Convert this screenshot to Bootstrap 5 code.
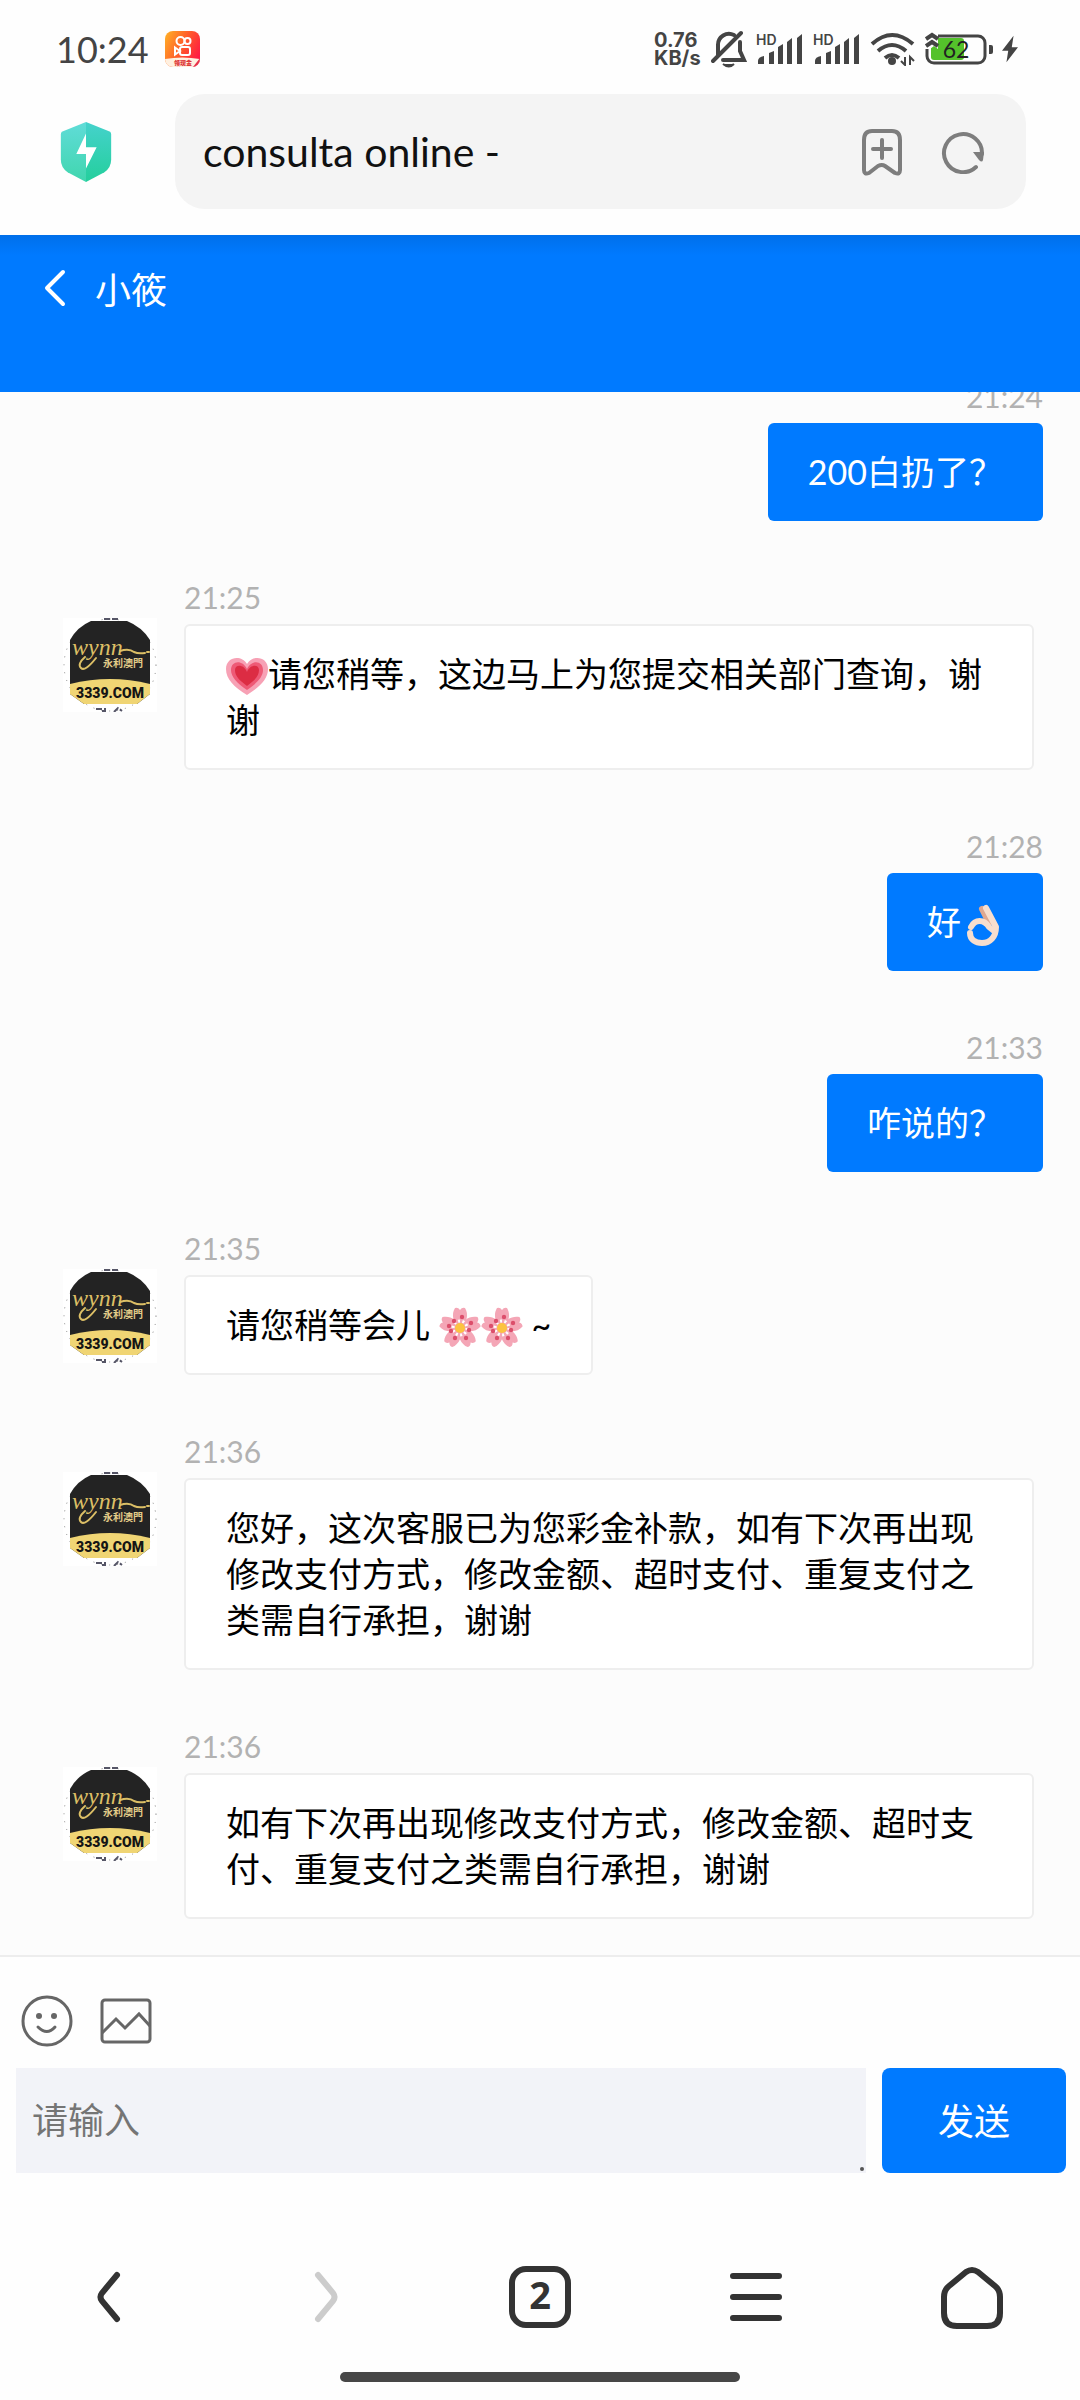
<!DOCTYPE html>
<html lang="zh-CN">
<head>
<meta charset="utf-8">
<meta name="viewport" content="width=device-width, initial-scale=1">
<title>consulta online</title>
<link rel="stylesheet" href="https://cdn.jsdelivr.net/npm/bootstrap@5.3.0/dist/css/bootstrap.min.css">
<style>
  :root { --brand: #007aff; --ink: #333; }
  body { font-family: Lato, "Noto Sans CJK SC", sans-serif; font-size: 34px; line-height: 46px; color: #000; background: #fefefe; }
  svg { display: block; flex: none; }
  button { font-family: inherit; }
  .plain-btn { background: none; border: 0; padding: 0; line-height: 0; }

  .status-bar { height: 94px; padding: 4px 62px 0 56px; color: #444; }
  .clock { font-size: 36px; }
  .status-icons { gap: 9px; }
  .net-speed { font: 700 20px/18px Inter, sans-serif; width: 48px; }
  .address-row { padding: 0 54px 26px 60px; gap: 63px; }
  .address-box { height: 115px; border-radius: 30px; background: #f4f4f4; padding: 0 41px 0 28px; gap: 37px; }
  .address-input { border: 0; background: none; font-size: 41px; color: #111; min-width: 0; padding: 0; outline: 0; }

  .chat-head { height: 157px; background: linear-gradient(#0070ea, var(--brand) 20px); color: #fff; padding: 32px 43px 0; gap: 28px; font-size: 36px; }
  .chat-log { flex: 1 1 0; min-height: 0; overflow: hidden; background: #fcfcfc; padding: 0 37px 36px 63px; gap: 54px; border-bottom: 2px solid #ededed; }
  .msg { flex: none; gap: 27px; }
  .msg-in { padding-right: 9px; }
  .avatar { margin-top: 43px; }
  .stamp { font-size: 30px; line-height: 44px; color: #b2b2b2; margin-bottom: 5px; }
  .bubble { padding: 25px 40px; border: 2px solid #eee; border-radius: 6px; background: #fff; }
  .bubble-out { padding: 26px 40px; border: 0; background: var(--brand); color: #fff; }
  .emo { display: inline-block; width: 42px; height: 42px; vertical-align: -7px; margin: -4px 0; }

  .composer { padding: 38px 14px 10px 16px; }
  .tools { gap: 27px; padding-left: 5px; margin-bottom: 21px; }
  .entry-row { gap: 16px; }
  .entry { height: 105px; border: 0; border-radius: 0; background: #f2f3f8; padding: 28px 16px; font-size: 36px; line-height: 48px; outline: 0; display: block; min-width: 0; resize: none; overflow: hidden; }
  .entry::placeholder { color: #757575; opacity: 1; }
  .grip { right: 2px; bottom: 2px; width: 4px; height: 4px; background: #555; }
  .send { width: 184px; height: 105px; border: 0; border-radius: 8px; background: var(--brand); color: #fff; font-size: 36px; }

  .tab-bar { padding-top: 79px; color: var(--ink); }
  .tab-bar > * { flex: 1 1 0; display: flex; justify-content: center; color: inherit; }
  .home-pill { width: 400px; height: 10px; border-radius: 5px; background: #474747; margin: 40px auto 18px; }
</style>
<script src="https://cdn.jsdelivr.net/npm/bootstrap@5.3.0/dist/js/bootstrap.bundle.min.js"></script>
</head>
<body>

<svg width="0" height="0" class="position-absolute" aria-hidden="true">
  <defs>
    <linearGradient id="appg" x1="0" y1="0.2" x2="1" y2="0.7"><stop offset="0" stop-color="#ffa726"/><stop offset=".5" stop-color="#ff5a2a"/><stop offset="1" stop-color="#ff1744"/></linearGradient>
    <linearGradient id="shl" x1="0" y1="0" x2="0" y2="1"><stop offset="0" stop-color="#60dcd8"/><stop offset="1" stop-color="#40d6ae"/></linearGradient>
    <linearGradient id="shr" x1="0" y1="0" x2="0" y2="1"><stop offset="0" stop-color="#45d2cc"/><stop offset="1" stop-color="#24cf9c"/></linearGradient>
    <clipPath id="appc"><rect width="35" height="36" rx="8"/></clipPath>
    <clipPath id="avc"><path d="M28 3H64Q79 9 87 22V76L74 86H21L7 76V22Q14 9 28 3Z"/></clipPath>
  </defs>
  <symbol id="wynn" viewBox="0 0 94 94">
    <rect width="94" height="94" fill="#fff"/>
    <circle cx="47" cy="47" r="46" fill="none" stroke="#888" stroke-width="1" stroke-dasharray="1 7"/>
    <g clip-path="url(#avc)">
      <rect width="94" height="94" fill="#232323"/>
      <path d="M0 68Q47 54 94 68V94H0z" fill="#f0d574"/>
    </g>
    <path d="M22 39Q14 46 18 50T33 40M57 33q9-3 14 1 4 2 11 1M84 34h2" fill="none" stroke="#dcbf66" stroke-width="2" stroke-linecap="round"/>
    <path d="M33 91h9v3M39 93h3M51 94l4-4 4 3M41 1h14" fill="none" stroke="#556" stroke-width="2" stroke-dasharray="6 2"/>
  </symbol>
  <symbol id="blossom" viewBox="0 0 42 42">
    <path id="petal" d="M21 21C14 17 12 7 16 1Q19 0 21 3Q23 0 26 1C30 7 28 17 21 21Z" fill="#f4a6b6"/>
    <use href="#petal" transform="rotate(72 21 21)"/><use href="#petal" transform="rotate(144 21 21)"/>
    <use href="#petal" transform="rotate(216 21 21)"/><use href="#petal" transform="rotate(288 21 21)"/>
    <circle cx="21" cy="21" r="7" fill="none" stroke="#fff" stroke-width="3" stroke-dasharray="2 2.4"/>
    <circle cx="21" cy="21" r="5" fill="#fcc341"/>
    <g fill="#dc4e6b"><circle cx="23" cy="10" r="2.2"/><circle cx="32" cy="16" r="2.2"/><circle cx="30" cy="23" r="2.2"/><circle cx="27" cy="31" r="2.2"/><circle cx="16" cy="31" r="2.2"/><circle cx="12" cy="24" r="2.2"/><circle cx="10" cy="19" r="2.2"/><circle cx="15" cy="14" r="2.2"/></g>
  </symbol>
</svg>

<div class="vh-100 d-flex flex-column">

  <div class="status-bar d-flex align-items-center">
    <span class="clock">10:24</span>
    <svg class="ms-3" width="35" height="36" viewBox="0 0 35 36"><g clip-path="url(#appc)"><rect width="35" height="36" fill="url(#appg)"/><path d="M0 28q17-3 35 0v8H0z" fill="#fff0e0"/><path d="M28 36l7-9v9z" fill="#e8324a"/></g><g fill="none" stroke="#fff" stroke-width="2"><circle cx="15.500" cy="10" r="4"/><circle cx="22.500" cy="10" r="3"/><rect x="15" y="16" width="10" height="8" rx="2"/><path d="M10 16.500l5 3.500-5 3.500z"/></g><text x="9" y="34" font-family="Noto Sans CJK SC" font-weight="900" font-size="6" fill="#d33">领现金</text></svg>
    <div class="status-icons ms-auto d-flex align-items-center">
      <div class="net-speed">0.76<br>KB/s</div>
      <svg width="36" height="38" viewBox="0 0 36 38" fill="none" stroke="currentColor" stroke-width="4"><path d="M7 26V15a11 11 0 0 1 16-10M29 12v9l4 9H12M2 31L30 3" stroke-linecap="round"/><path d="M12 34q6 5 11 0" fill="currentColor" stroke-width="2"/></svg>
      <svg width="48" height="32" viewBox="0 0 48 32" fill="currentColor"><text x="0" y="12" font-family="Inter" font-weight="600" font-size="14">HD</text><path d="M2 31v-3q0-4 6-5v8zM13 31V20l5-2v13zM22 31V14l5-3v20zM31 31V9l5-4v26zM41 31V5l5-4v30z"/></svg>
      <svg width="48" height="32" viewBox="0 0 48 32" fill="currentColor"><text x="0" y="12" font-family="Inter" font-weight="600" font-size="14">HD</text><path d="M2 31v-3q0-4 6-5v8zM13 31V20l5-2v13zM22 31V14l5-3v20zM31 31V9l5-4v26zM41 31V5l5-4v30z"/></svg>
      <svg width="46" height="34" viewBox="0 0 46 34"><g fill="none" stroke="currentColor" stroke-width="4"><path d="M2 12Q22-6 43 12"/><path d="M8 19Q22 7 36 19"/><path d="M15 26q7-6 14 0"/></g><circle cx="22" cy="29" r="4" fill="currentColor"/><path d="M35 25v8l-4-4M40 33v-8l4 4" fill="none" stroke="currentColor" stroke-width="2"/></svg>
      <svg width="68" height="34" viewBox="0 0 68 34"><rect x="6" y="6" width="33" height="22" rx="3" fill="#54c22b"/><rect x="2" y="4" width="58" height="27" rx="7" fill="none" stroke="currentColor" stroke-width="3"/><path d="M0 0h13v17l-4-3-4 3H0z" fill="#fff"/><path d="M1 7l6-4 6 4M1 14l6-4 6 4" fill="none" stroke="currentColor" stroke-width="4"/><path d="M64 13h2q2 0 2 2v5q0 2-2 2h-2z" fill="currentColor"/><text x="31" y="26" text-anchor="middle" font-family="Lato" font-size="23" fill="#222">62</text></svg>
      <svg width="16" height="30" viewBox="0 0 18 30"><path d="M13 0L0 17h7L5 30 18 13h-7z" fill="currentColor"/></svg>
    </div>
  </div>

  <div class="address-row d-flex align-items-center">
    <svg width="52" height="60" viewBox="0 0 52 62"><path d="M26 0L1 10q-1 1-1 3v26q0 8 7 13l19 10z" fill="url(#shl)"/><path d="M26 0l25 10q1 1 1 3v26q0 8-7 13L26 62z" fill="url(#shr)"/><path d="M26 12L16 33h10v15l11-22H26z" fill="#fff"/></svg>
    <div class="address-box d-flex align-items-center flex-grow-1">
      <input class="address-input flex-grow-1" type="text" value="consulta online -" aria-label="地址栏">
      <button class="plain-btn" aria-label="收藏"><svg width="44" height="48" viewBox="0 0 44 48" fill="none" stroke="#7d7d7d" stroke-width="4" stroke-linecap="round" stroke-linejoin="round"><path d="M12 3h20q8 0 8 9v30q0 5-5 3l-10-7q-3-2-7 0l-9 7q-5 2-5-3V12q0-9 8-9zM22 12v18M13 21h18"/></svg></button>
      <button class="plain-btn" aria-label="刷新"><svg width="44" height="44" viewBox="0 0 44 44"><path d="M35 37A19 19 0 1 1 41 24" fill="none" stroke="#7d7d7d" stroke-width="4" stroke-linecap="round"/><path d="M32 22h11l-1 8q-1 3-4 0z" fill="#7d7d7d"/></svg></button>
    </div>
  </div>

  <header class="chat-head d-flex align-items-start">
    <button class="plain-btn" aria-label="返回"><svg width="24" height="42" viewBox="0 0 24 42" fill="none" stroke="#fff" stroke-width="4" stroke-linecap="round" stroke-linejoin="round"><path d="M20 5L4 21l16 16"/></svg></button>
    <span>小筱</span>
  </header>

  <main class="chat-log d-flex flex-column justify-content-end">
    <div class="msg d-flex flex-column align-items-end gap-0">
      <div class="stamp">21:24</div>
      <div class="bubble bubble-out">200白扔了？</div>
    </div>
    <div class="msg msg-in d-flex align-items-start">
      <svg class="avatar" width="94" height="94" viewBox="0 0 94 94"><use href="#wynn"/><text x="9" y="37" font-family="Liberation Serif" font-style="italic" font-size="24" fill="#dcbf66">wynn</text><text x="40" y="49" font-family="Noto Sans CJK TC" font-weight="700" font-size="10" fill="#e3cd8a">永利澳門</text><text x="47" y="80" text-anchor="middle" font-family="Roboto" font-weight="900" font-size="14" fill="#151515">3339.COM</text></svg>
      <div>
        <div class="stamp">21:25</div>
        <div class="bubble"><svg class="emo" viewBox="0 0 42 42"><path d="M21 39C8 31 0 23 0 13 0 1 15-2 21 8 27-2 42 1 42 13 42 23 34 31 21 39Z" fill="#f7a1b5"/><path d="M21 34C11 27 5 21 5 14 5 5 16 3 21 13 26 3 37 5 37 14 37 21 31 27 21 34Z" fill="#ee5a76"/><path d="M21 30C13 24 9 20 9 14 9 8 18 8 21 16 24 8 33 8 33 14 33 20 29 24 21 30Z" fill="#dc2c43"/></svg>请您稍等，这边马上为您提交相关部门查询，谢谢</div>
      </div>
    </div>
    <div class="msg d-flex flex-column align-items-end gap-0">
      <div class="stamp">21:28</div>
      <div class="bubble bubble-out">好<svg class="emo" viewBox="0 0 42 42" fill="none" stroke-linecap="round" stroke-linejoin="round"><path d="M21 5l7 14" stroke="#dfa891" stroke-width="6"/><path d="M9 29c0 7 6 10 12 10 8 0 14-6 14-16L25 4" stroke="#f7dece" stroke-width="6"/><path d="M10 23c4-8 13-8 18 0l5 4" stroke="#f7dece" stroke-width="6"/></svg></div>
    </div>
    <div class="msg d-flex flex-column align-items-end gap-0">
      <div class="stamp">21:33</div>
      <div class="bubble bubble-out">咋说的？</div>
    </div>
    <div class="msg msg-in d-flex align-items-start">
      <svg class="avatar" width="94" height="94" viewBox="0 0 94 94"><use href="#wynn"/><text x="9" y="37" font-family="Liberation Serif" font-style="italic" font-size="24" fill="#dcbf66">wynn</text><text x="40" y="49" font-family="Noto Sans CJK TC" font-weight="700" font-size="10" fill="#e3cd8a">永利澳門</text><text x="47" y="80" text-anchor="middle" font-family="Roboto" font-weight="900" font-size="14" fill="#151515">3339.COM</text></svg>
      <div>
        <div class="stamp">21:35</div>
        <div class="bubble">请您稍等会儿 <svg class="emo"><use href="#blossom"/></svg><svg class="emo"><use href="#blossom"/></svg> ~</div>
      </div>
    </div>
    <div class="msg msg-in d-flex align-items-start">
      <svg class="avatar" width="94" height="94" viewBox="0 0 94 94"><use href="#wynn"/><text x="9" y="37" font-family="Liberation Serif" font-style="italic" font-size="24" fill="#dcbf66">wynn</text><text x="40" y="49" font-family="Noto Sans CJK TC" font-weight="700" font-size="10" fill="#e3cd8a">永利澳門</text><text x="47" y="80" text-anchor="middle" font-family="Roboto" font-weight="900" font-size="14" fill="#151515">3339.COM</text></svg>
      <div>
        <div class="stamp">21:36</div>
        <div class="bubble">您好，这次客服已为您彩金补款，如有下次再出现修改支付方式，修改金额、超时支付、重复支付之类需自行承担，谢谢</div>
      </div>
    </div>
    <div class="msg msg-in d-flex align-items-start">
      <svg class="avatar" width="94" height="94" viewBox="0 0 94 94"><use href="#wynn"/><text x="9" y="37" font-family="Liberation Serif" font-style="italic" font-size="24" fill="#dcbf66">wynn</text><text x="40" y="49" font-family="Noto Sans CJK TC" font-weight="700" font-size="10" fill="#e3cd8a">永利澳門</text><text x="47" y="80" text-anchor="middle" font-family="Roboto" font-weight="900" font-size="14" fill="#151515">3339.COM</text></svg>
      <div>
        <div class="stamp">21:36</div>
        <div class="bubble">如有下次再出现修改支付方式，修改金额、超时支付、重复支付之类需自行承担，谢谢</div>
      </div>
    </div>
  </main>

  <form class="composer" onsubmit="return false">
    <div class="tools d-flex align-items-center">
      <button type="button" class="plain-btn" aria-label="表情"><svg width="52" height="52" viewBox="0 0 52 52" fill="none" stroke="#666" stroke-width="3" stroke-linecap="round"><circle cx="26" cy="26" r="24"/><path d="M17 32q9 9 17 0"/><g fill="#666" stroke="none"><circle cx="18" cy="21" r="3"/><circle cx="33" cy="21" r="3"/></g></svg></button>
      <button type="button" class="plain-btn" aria-label="图片"><svg width="52" height="52" viewBox="0 0 52 52" fill="none" stroke="#666" stroke-width="3"><rect x="2" y="5" width="48" height="42" rx="3"/><path d="M2 38l14-14 9 9 14-14 11 12"/></svg></button>
    </div>
    <div class="entry-row d-flex">
      <div class="position-relative flex-grow-1">
        <textarea class="entry w-100" placeholder="请输入" aria-label="请输入"></textarea>
        <span class="grip position-absolute rounded-circle"></span>
      </div>
      <button type="submit" class="send">发送</button>
    </div>
  </form>

  <nav>
    <div class="tab-bar d-flex align-items-center">
      <button class="plain-btn" aria-label="后退"><svg width="64" height="70" viewBox="0 0 64 70" fill="none" stroke="currentColor" stroke-width="6" stroke-linecap="round"><path d="M41 13L26 31q-3 4 0 8l15 18"/></svg></button>
      <button class="plain-btn" aria-label="前进"><svg width="64" height="70" viewBox="0 0 64 70" fill="none" stroke="#ccc" stroke-width="6" stroke-linecap="round"><path d="M26 13l15 18q3 4 0 8L26 57"/></svg></button>
      <button class="plain-btn" aria-label="标签页"><svg width="64" height="70" viewBox="0 0 64 70"><rect x="4" y="7" width="56" height="56" rx="14" fill="none" stroke="currentColor" stroke-width="6"/><text x="32" y="47" text-anchor="middle" font-family="Noto Sans" font-weight="700" font-size="38" fill="currentColor">2</text></svg></button>
      <button class="plain-btn" aria-label="菜单"><svg width="64" height="70" viewBox="0 0 64 70" fill="none" stroke="currentColor" stroke-width="6" stroke-linecap="round"><path d="M9 14h46M9 35h46M9 56h46"/></svg></button>
      <button class="plain-btn" aria-label="主页"><svg width="64" height="70" viewBox="0 0 64 70" fill="none" stroke="currentColor" stroke-width="6" stroke-linejoin="round"><path d="M26 10q6-4 12 0l17 14q5 4 5 11v16q0 13-13 13H17Q4 64 4 51V35q0-7 5-11z"/></svg></button>
    </div>
    <div class="home-pill"></div>
  </nav>
</div>
</body>
</html>
